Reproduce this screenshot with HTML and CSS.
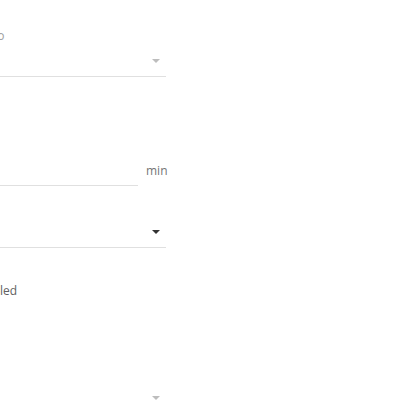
FILE: index.html
```html
<!DOCTYPE html>
<html lang="en">

<head>
    <meta charset="UTF-8">
    <meta name="viewport" content="width=device-width, initial-scale=1.0">
    <title>Settings</title>
    <link rel="stylesheet" href="styles.css">
</head>

<body>
    <div class="form">
        <div class="field first">
            <label class="field-label indent">Auto</label>
            <div class="select disabled">
                <span class="value"></span>
                <span class="arrow"></span>
            </div>
        </div>

        <div class="field second">
            <div class="input-row">
                <div class="input"></div>
                <span class="unit">min</span>
            </div>
        </div>

        <div class="field third">
            <div class="select">
                <span class="value"></span>
                <span class="arrow"></span>
            </div>
        </div>

        <div class="check">
            <span class="check-text">Enabled</span>
        </div>

        <div class="field last">
            <div class="select disabled">
                <span class="value"></span>
                <span class="arrow"></span>
            </div>
        </div>
    </div>
</body>

</html>
```

FILE: styles.css
```css
html,
body {
    margin: 0;
    padding: 0;
    height: 100%;
    overflow: hidden;
    background: #fff;
}

body {
    font-family: "Open Sans", "Noto Sans", sans-serif;
    color: #212121;
}

.form {
    margin-left: -30px;
    width: 196px;
}

.field-label {
    display: block;
    font-size: 12px;
    line-height: 16px;
    color: #9e9e9e;
}

.field-label.indent {
    padding-left: 8px;
}

.field.first {
    padding-top: 28px;
}

.select {
    display: flex;
    align-items: center;
    justify-content: space-between;
    height: 31px;
    padding-top: 1px;
    border-bottom: 1px solid #e0e0e0;
}

.select .arrow {
    width: 0;
    height: 0;
    margin-right: 6px;
    border-left: 4px solid transparent;
    border-right: 4px solid transparent;
    border-top: 4px solid #333;
}

.select.disabled .arrow {
    border-top-color: #bdbdbd;
}

.field.second {
    padding-top: 76px;
}

.input-row {
    display: flex;
    align-items: flex-end;
}

.input {
    flex: none;
    width: 168px;
    height: 32px;
    border-bottom: 1px solid #e0e0e0;
}

.unit {
    flex: none;
    margin-left: 8px;
    margin-bottom: 8px;
    font-size: 12px;
    line-height: 14px;
    color: #757575;
}

.field.third {
    padding-top: 29px;
}

.check {
    padding-top: 35px;
    padding-left: 2px;
    font-size: 12px;
    line-height: 16px;
    color: #616161;
}

.field.last {
    padding-top: 82px;
}
```
